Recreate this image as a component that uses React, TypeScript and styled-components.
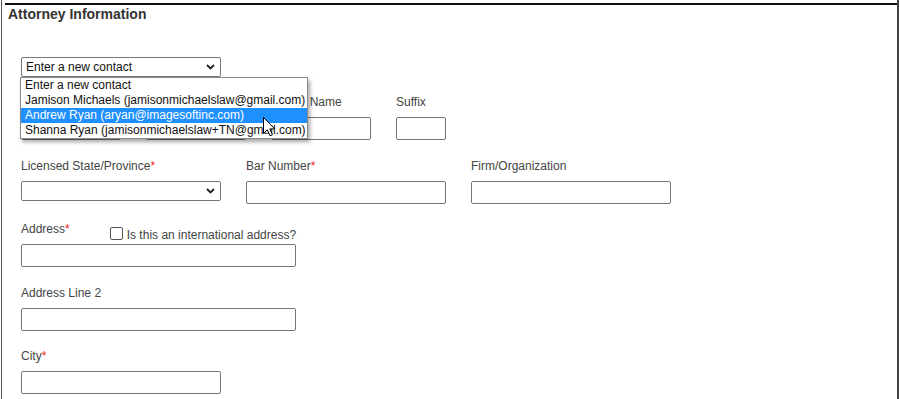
import React from "react";
import styled, { createGlobalStyle } from "styled-components";

const GlobalStyle = createGlobalStyle`
  html, body {
    margin: 0;
    padding: 0;
    background: #fff;
  }
  body {
    font-family: "Liberation Sans", Arial, sans-serif;
    font-size: 12px;
    color: #444;
  }
`;

const Page = styled.div`
  box-sizing: border-box;
  margin-left: 1px;
  width: 898px;
  height: 399px;
  border-left: 1px solid #555;
  border-right: 2px solid #444;
  overflow: hidden;
`;

const Section = styled.section`
  margin-top: 3px;
  margin-left: 3px;
  border-top: 2px solid #111;
`;

const Heading = styled.h2`
  margin: 0;
  padding: 1px 0 0 3px;
  font-size: 14px;
  line-height: 16px;
  font-weight: bold;
  color: #333;
`;

const Form = styled.div`
  padding: 35px 0 0 16px;
`;

const ContactWrap = styled.div`
  position: relative;
  width: 200px;
  margin-bottom: 18px;
`;

const SelectBox = styled.div<{ $width: number }>`
  box-sizing: border-box;
  width: ${(p) => p.$width}px;
  height: 20px;
  border: 1px solid #767676;
  border-radius: 2px;
  padding: 0 5px 0 4px;
  display: flex;
  align-items: center;
  justify-content: space-between;
  color: #111;
  font-size: 12px;
`;

const DropList = styled.ul`
  position: absolute;
  top: 20px;
  left: -1px;
  z-index: 2;
  box-sizing: border-box;
  width: 288px;
  margin: 0;
  padding: 0;
  list-style: none;
  background: #fff;
  border: 1px solid #8a8a8a;
  box-shadow: 2px 3px 4px rgba(0, 0, 0, 0.35);
`;

const Option = styled.li<{ $active?: boolean }>`
  height: 15px;
  line-height: 15px;
  padding-left: 4px;
  white-space: nowrap;
  font-size: 12px;
  color: ${(p) => (p.$active ? "#fff" : "#111")};
  background: ${(p) => (p.$active ? "#1e90ff" : "transparent")};
`;

const Cursor = styled.svg`
  position: absolute;
  left: 242px;
  top: 60px;
  z-index: 3;
`;

const Row = styled.div`
  display: flex;
  gap: 25px;
  margin-bottom: 18.5px;
`;

const Field = styled.div`
  display: flex;
  flex-direction: column;
`;

const LabelLine = styled.div`
  display: flex;
  align-items: flex-start;
  height: 14px;
  margin-bottom: 8px;
`;

const Label = styled.label`
  font-size: 12px;
  line-height: 14px;
  color: #444;
  white-space: nowrap;
`;

const Req = styled.span`
  color: #e22;
`;

const TextInput = styled.input<{ $width: number }>`
  box-sizing: border-box;
  width: ${(p) => p.$width}px;
  height: 23px;
  margin: 0;
  border: 1px solid #767676;
  border-radius: 2px;
  background: #fff;
  font-family: inherit;
  font-size: 12px;
`;

const CheckLabel = styled.label`
  display: flex;
  align-items: center;
  margin-left: 40px;
  margin-top: 6px;
  font-size: 12px;
  line-height: 14px;
  color: #444;
  white-space: nowrap;
`;

const CheckBox = styled.span`
  box-sizing: border-box;
  width: 13px;
  height: 13px;
  border: 1px solid #555;
  border-radius: 2px;
  margin-right: 4px;
  margin-top: -3px;
`;

const Chevron = () => (
  <svg width="9" height="6" viewBox="0 0 9 6">
    <path d="M1 1 L4.5 4.5 L8 1" fill="none" stroke="#222" strokeWidth="1.8" />
  </svg>
);

const LabelText: React.FC<{ text: string; required?: boolean }> = ({ text, required }) => (
  <Label>
    {text}
    {required && <Req>*</Req>}
  </Label>
);

const InputField: React.FC<{ label: string; required?: boolean; width: number }> = ({
  label,
  required,
  width,
}) => (
  <Field>
    <LabelLine>
      <LabelText text={label} required={required} />
    </LabelLine>
    <TextInput $width={width} />
  </Field>
);

const contacts = [
  "Enter a new contact",
  "Jamison Michaels (jamisonmichaelslaw@gmail.com)",
  "Andrew Ryan (aryan@imagesoftinc.com)",
  "Shanna Ryan (jamisonmichaelslaw+TN@gmail.com)",
];

export default function App() {
  return (
    <>
      <GlobalStyle />
      <Page>
        <Section>
          <Heading>Attorney Information</Heading>
          <Form>
            <ContactWrap>
              <SelectBox $width={200}>
                <span>Enter a new contact</span>
                <Chevron />
              </SelectBox>
              <DropList>
                {contacts.map((c, i) => (
                  <Option key={c} $active={i === 2}>
                    {c}
                  </Option>
                ))}
              </DropList>
              <Cursor width="13" height="20" viewBox="0 0 13 20">
                <path
                  d="M0.5 0.5 L0.5 16.5 L4.3 12.8 L7 18.8 L9.4 17.8 L6.8 11.9 L11.8 11.9 Z"
                  fill="#fff"
                  stroke="#000"
                  strokeWidth="1"
                  strokeLinejoin="round"
                />
              </Cursor>
            </ContactWrap>

            <Row>
              <InputField label="First Name" required width={100} />
              <InputField label="Last Name" required width={100} />
              <InputField label="Middle Name" width={100} />
              <InputField label="Suffix" width={50} />
            </Row>

            <Row>
              <Field>
                <LabelLine>
                  <LabelText text="Licensed State/Province" required />
                </LabelLine>
                <SelectBox $width={200}>
                  <span />
                  <Chevron />
                </SelectBox>
              </Field>
              <InputField label="Bar Number" required width={200} />
              <InputField label="Firm/Organization" width={200} />
            </Row>

            <Row>
              <Field>
                <LabelLine>
                  <LabelText text="Address" required />
                  <CheckLabel>
                    <CheckBox />
                    Is this an international address?
                  </CheckLabel>
                </LabelLine>
                <TextInput $width={275} />
              </Field>
            </Row>

            <Row>
              <InputField label="Address Line 2" width={275} />
            </Row>

            <Row>
              <InputField label="City" required width={200} />
            </Row>
          </Form>
        </Section>
      </Page>
    </>
  );
}
